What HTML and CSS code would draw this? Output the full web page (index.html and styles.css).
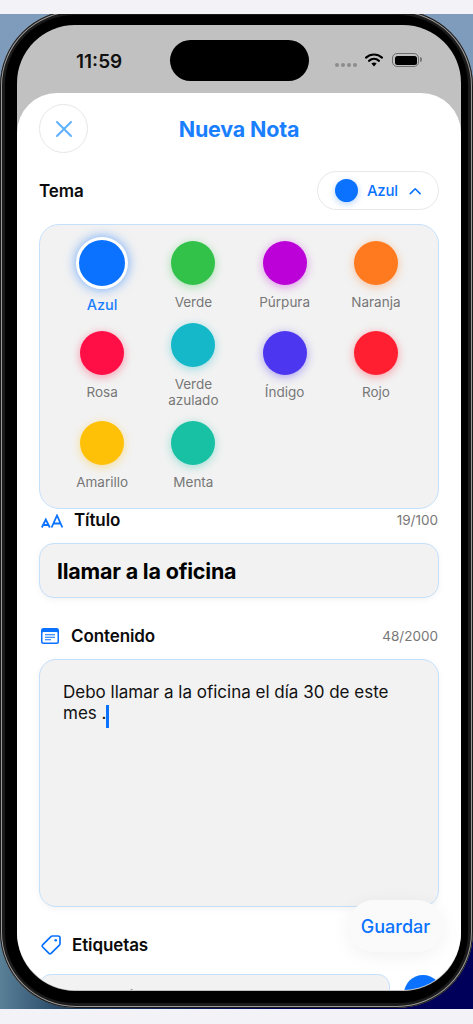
FILE: index.html
```html
<!DOCTYPE html>
<html lang="es">
<head>
<meta charset="utf-8">
<title>Nueva Nota</title>
<link rel="stylesheet" href="styles.css">
</head>
<body>
<div class="wall">
  <div class="phone">
    <div class="screen">
      <div class="status">
        <span class="time">11:59</span>
        <span class="status-icons">
          <span class="dots"><i></i><i></i><i></i><i></i></span>
          <svg class="wifi" viewBox="0 0 18 14" width="18" height="14"><path d="M1 4.6C5.6.4 12.4.4 17 4.6" fill="none" stroke="#000" stroke-width="2.1" stroke-linecap="round"/><path d="M4 7.9c3-2.7 7-2.700 10 0" fill="none" stroke="#000" stroke-width="2.1" stroke-linecap="round"/><path d="M6.4 10.4c1.6-1.3 3.6-1.3 5.2 0L9 13.4z" fill="#000"/></svg>
          <span class="battery"><b></b></span>
        </span>
      </div>
      <div class="island"></div>
      <main class="sheet">
        <header class="head">
          <button class="close" aria-label="Cerrar"><svg viewBox="0 0 18 18" width="18" height="18"><path d="M2 2l14 14M16 2L2 16" stroke="#5fb0ff" stroke-width="2" stroke-linecap="round" fill="none"/></svg></button>
          <h1>Nueva Nota</h1>
        </header>
        <div class="theme-row">
          <span class="label">Tema</span>
          <button class="pill"><i class="pill-dot"></i><span>Azul</span><svg viewBox="0 0 14 8" width="13" height="8"><path d="M1.5 7L7 1.5 12.500 7" fill="none" stroke="#0a72ff" stroke-width="1.800" stroke-linecap="round" stroke-linejoin="round"/></svg></button>
        </div>
        <section class="palette">
          <div class="swatch selected"><i class="c-azul"></i><span>Azul</span></div>
          <div class="swatch"><i class="c-verde"></i><span>Verde</span></div>
          <div class="swatch"><i class="c-purpura"></i><span>Púrpura</span></div>
          <div class="swatch"><i class="c-naranja"></i><span>Naranja</span></div>
          <div class="swatch"><i class="c-rosa"></i><span>Rosa</span></div>
          <div class="swatch"><i class="c-teal"></i><span>Verde azulado</span></div>
          <div class="swatch"><i class="c-indigo"></i><span>Índigo</span></div>
          <div class="swatch"><i class="c-rojo"></i><span>Rojo</span></div>
          <div class="swatch"><i class="c-amarillo"></i><span>Amarillo</span></div>
          <div class="swatch"><i class="c-menta"></i><span>Menta</span></div>
        </section>
        <div class="field-head title-head">
          <span class="field-name"><svg class="aa" viewBox="0 0 22 14" width="22" height="14"><path d="M.8 13.500L4.800 5.500 8.800 13.500M2.200 11h5.200M10.600 13.500L16 1.500l5.400 12M12.600 9.500h6.800" fill="none" stroke="#0a72ff" stroke-width="1.800"/></svg><span class="label">Título</span></span>
          <span class="count">19/100</span>
        </div>
        <div class="box title-box">llamar a la oficina</div>
        <div class="field-head content-head">
          <span class="field-name"><svg class="doc" viewBox="0 0 18 16" width="18" height="16"><rect width="18" height="16" rx="2.500" fill="#0a72ff"/><rect x="1.500" y="4" width="15" height="10.500" rx="1" fill="#fff"/><path d="M4 6.800h10M4 9.300h10M4 11.800h6" stroke="#0a72ff" stroke-width="1.100"/></svg><span class="label">Contenido</span></span>
          <span class="count">48/2000</span>
        </div>
        <div class="box content-box">Debo llamar a la oficina el día 30 de este mes .<i class="caret"></i></div>
        <div class="field-head tags-head">
          <span class="field-name"><svg class="tag" viewBox="0 0 22 22" width="22" height="22"><path d="M12.300 2H18a2 2 0 0 1 2 2v5.700a2 2 0 0 1-.6 1.400l-8.300 8.300a1.500 1.500 0 0 1-2.100 0l-6.400-6.400a1.500 1.500 0 0 1 0-2.100l8.300-8.300a2 2 0 0 1 1.400-.6z" fill="none" stroke="#0a72ff" stroke-width="1.700"/><circle cx="15.700" cy="6.300" r="1.300" fill="#0a72ff"/></svg><span class="label">Etiquetas</span></span>
        </div>
        <div class="tag-row">
          <div class="tag-input">etiqueta</div>
          <i class="tag-add"></i>
        </div>
      </main>
      <button class="save">Guardar</button>
    </div>
  </div>
</div>
</body>
</html>
```
FILE: styles.css
```css
* { box-sizing: border-box; }
html, body { margin: 0; padding: 0; }
body {
  background: #f2f2f7;
  width: 473px;
  height: 1024px;
  overflow: hidden;
  font-family: Inter, "Liberation Sans", sans-serif;
  padding-top: 14px;
}
.wall {
  height: 995px;
  overflow: hidden;
  background-image:
    linear-gradient(180deg, #7f9cbd 0, #6d8eaa 50%, #4b7590 90%, transparent 90%),
    linear-gradient(90deg, #5a8098 0, #1a3a5a 16%, #00005a 60%, #00005a 100%);
}
.phone {
  position: relative;
  height: 998px;
  margin-top: -4px;
  background: #1b1b1b;
  border-radius: 76px;
  box-shadow: inset 0 0 0 1px #1b1b1b, inset 0 0 0 2px #9a9a9a;
  padding: 5px;
}
.screen {
  position: relative;
  height: 988px;
  background: #000;
  border-radius: 70px;
  padding: 10px 7px 12px 12px;
  overflow: hidden;
}
.screen::before {
  content: "";
  position: absolute;
  left: 12px;
  top: 10px;
  right: 7px;
  bottom: 12px;
  background: #c1c1c1;
  border-radius: 58px;
}
.status {
  position: relative;
  height: 68px;
  display: flex;
  justify-content: space-between;
  padding: 24px 42px 0 59px;
}
.time { font-size: 19px; font-weight: 600; line-height: 22px; color: #111; margin-top: 2px; }
.status-icons { display: flex; align-items: center; height: 22px; gap: 8px; }
.dots { display: flex; gap: 2px; margin-top: 10px; }
.dots i { width: 4px; height: 4px; border-radius: 50%; background: #8c8c8c; }
.wifi { margin-top: -1px; margin-right: 1px; }
.battery {
  width: 27px; height: 14px; border: 1.500px solid #6e6e6e; border-radius: 5px; padding: 1.500px; position: relative;
}
.battery::after {
  content: ""; position: absolute; right: -4px; top: 3px; width: 2px; height: 5px; border-radius: 0 2px 2px 0; background: #777;
}
.battery b { display: block; height: 100%; background: #000; border-radius: 2.500px; }
.island {
  position: absolute;
  left: 165px;
  top: 25px;
  width: 139px;
  height: 41px;
  border-radius: 21px;
  background: #000;
}
.sheet {
  position: relative;
  background: #fff;
  height: 897px;
  border-radius: 40px 40px 58px 58px;
  padding: 11px 22px 0 22px;
  overflow: hidden;
}
.head { position: relative; display: flex; justify-content: center; align-items: center; height: 49px; }
.close {
  position: absolute; left: 0; top: 0;
  width: 49px; height: 49px; border-radius: 50%;
  border: 1.500px solid #e6e6e6; background: #fff; padding: 0;
  display: flex; align-items: center; justify-content: center;
}
h1 { margin: 0; font-size: 21.500px; font-weight: 700; color: #1a7fff; letter-spacing: -0.2px; }
.theme-row { display: flex; justify-content: space-between; align-items: center; height: 39px; margin-top: 18px; }
.label { font-size: 17px; font-weight: 600; color: #0b0b0b; letter-spacing: -0.1px; }
.pill {
  display: flex; align-items: center; gap: 9px;
  width: 122px; height: 39px; padding: 0 17px;
  border: 1.500px solid #e8e8e8; border-radius: 20px; background: #fff;
  font: 500 15px Inter, "Liberation Sans", sans-serif; letter-spacing: -0.3px; color: #0a72ff;
}
.pill-dot { width: 23px; height: 23px; border-radius: 50%; background: #0a72ff; box-shadow: 0 2px 6px rgba(10,114,255,.3); flex: none; }
.pill svg { margin-left: 2px; }
.palette {
  margin-top: 14px;
  height: 285px;
  padding: 12px 16.500px 15px;
  background: #f2f2f2;
  border: 1.500px solid #c4e0fb;
  border-radius: 20px;
  display: grid;
  grid-template-columns: repeat(4, 1fr);
  grid-auto-rows: minmax(76px, auto);
  row-gap: 10px;
  align-items: center;
}
.swatch { display: flex; flex-direction: column; align-items: center; text-align: center; gap: 9px; }
.swatch i { width: 44px; height: 44px; border-radius: 50%; display: block; box-shadow: 0 2px 10px var(--glow); }
.swatch span { font-size: 13.500px; line-height: 16px; color: #777; font-weight: 400; max-width: 70px; }
.selected { gap: 8px; }
.selected i { width: 52px; height: 52px; border: 3.500px solid #fff; box-shadow: 0 0 12px rgba(10,114,255,.6); }
.selected span { color: #1a7fff; font-size: 14.500px; font-weight: 500; }
.c-azul { background: #0a72ff; }
.c-verde { background: #32c24a; --glow: rgba(50,194,74,.4); }
.c-purpura { background: #bb00d8; --glow: rgba(187,0,216,.4); }
.c-naranja { background: #ff7a1f; --glow: rgba(255,122,31,.4); }
.c-rosa { background: #ff0f45; --glow: rgba(255,15,69,.4); }
.c-teal { background: #14b8c8; --glow: rgba(20,184,200,.4); }
.c-indigo { background: #4d36f0; --glow: rgba(77,54,240,.45); }
.c-rojo { background: #ff1f30; --glow: rgba(255,31,48,.4); }
.c-amarillo { background: #ffc107; --glow: rgba(255,193,7,.4); }
.c-menta { background: #18c0a4; --glow: rgba(24,192,164,.4); }
.field-head { display: flex; justify-content: space-between; align-items: center; padding-left: 2px; }
.field-name { display: flex; align-items: center; }
.count { font-size: 13.500px; font-weight: 400; color: #777; padding-right: 1px; }
.title-head { height: 22px; }
.title-head .aa { margin-right: 11px; margin-top: 1px; }
.box {
  background: #f2f2f2;
  border: 1.500px solid #c4e0fb;
  box-shadow: 0 2px 6px rgba(0,0,0,.05);
}
.title-box {
  height: 55px; margin-top: 12px; border-radius: 15px;
  padding: 0 17px; display: flex; align-items: center;
  font-size: 21.500px; font-weight: 700; color: #000; letter-spacing: -0.2px;
}
.content-head { height: 22px; margin-top: 27px; }
.content-head .doc { margin-right: 12px; }
.content-box {
  height: 248px; margin-top: 12px; border-radius: 17px;
  padding: 22px 22px 0 23px;
  font-size: 17px; line-height: 21px; color: #111;
}
.caret { display: inline-block; width: 2.500px; height: 23px; background: #0a72ff; vertical-align: -5px; margin: -4px 0 -4px 0; }
.tags-head { height: 22px; margin-top: 27px; }
.tags-head .tag { margin-right: 10px; margin-left: -1px; }
.tag-row { display: flex; gap: 14px; margin-top: 18px; }
.tag-input {
  width: 351px; height: 50px; flex: none;
  background: #f2f2f2; border: 1.500px solid #c4e0fb; border-radius: 12px;
  padding: 12px 0 0 76px;
  font-size: 15px; line-height: 18px; color: #8a8a8a;
}
.tag-add { width: 38px; height: 38px; border-radius: 50%; background: #0a72ff; flex: none; margin-top: 1px; }
.save {
  position: absolute;
  right: 25px;
  top: 885px;
  width: 95px; height: 52px;
  border: 0; border-radius: 26px;
  background: #fafafa;
  box-shadow: 0 4px 20px rgba(0,0,0,.06);
  font: 500 18px Inter, "Liberation Sans", sans-serif; color: #0a72ff;
  padding: 0;
}
```
